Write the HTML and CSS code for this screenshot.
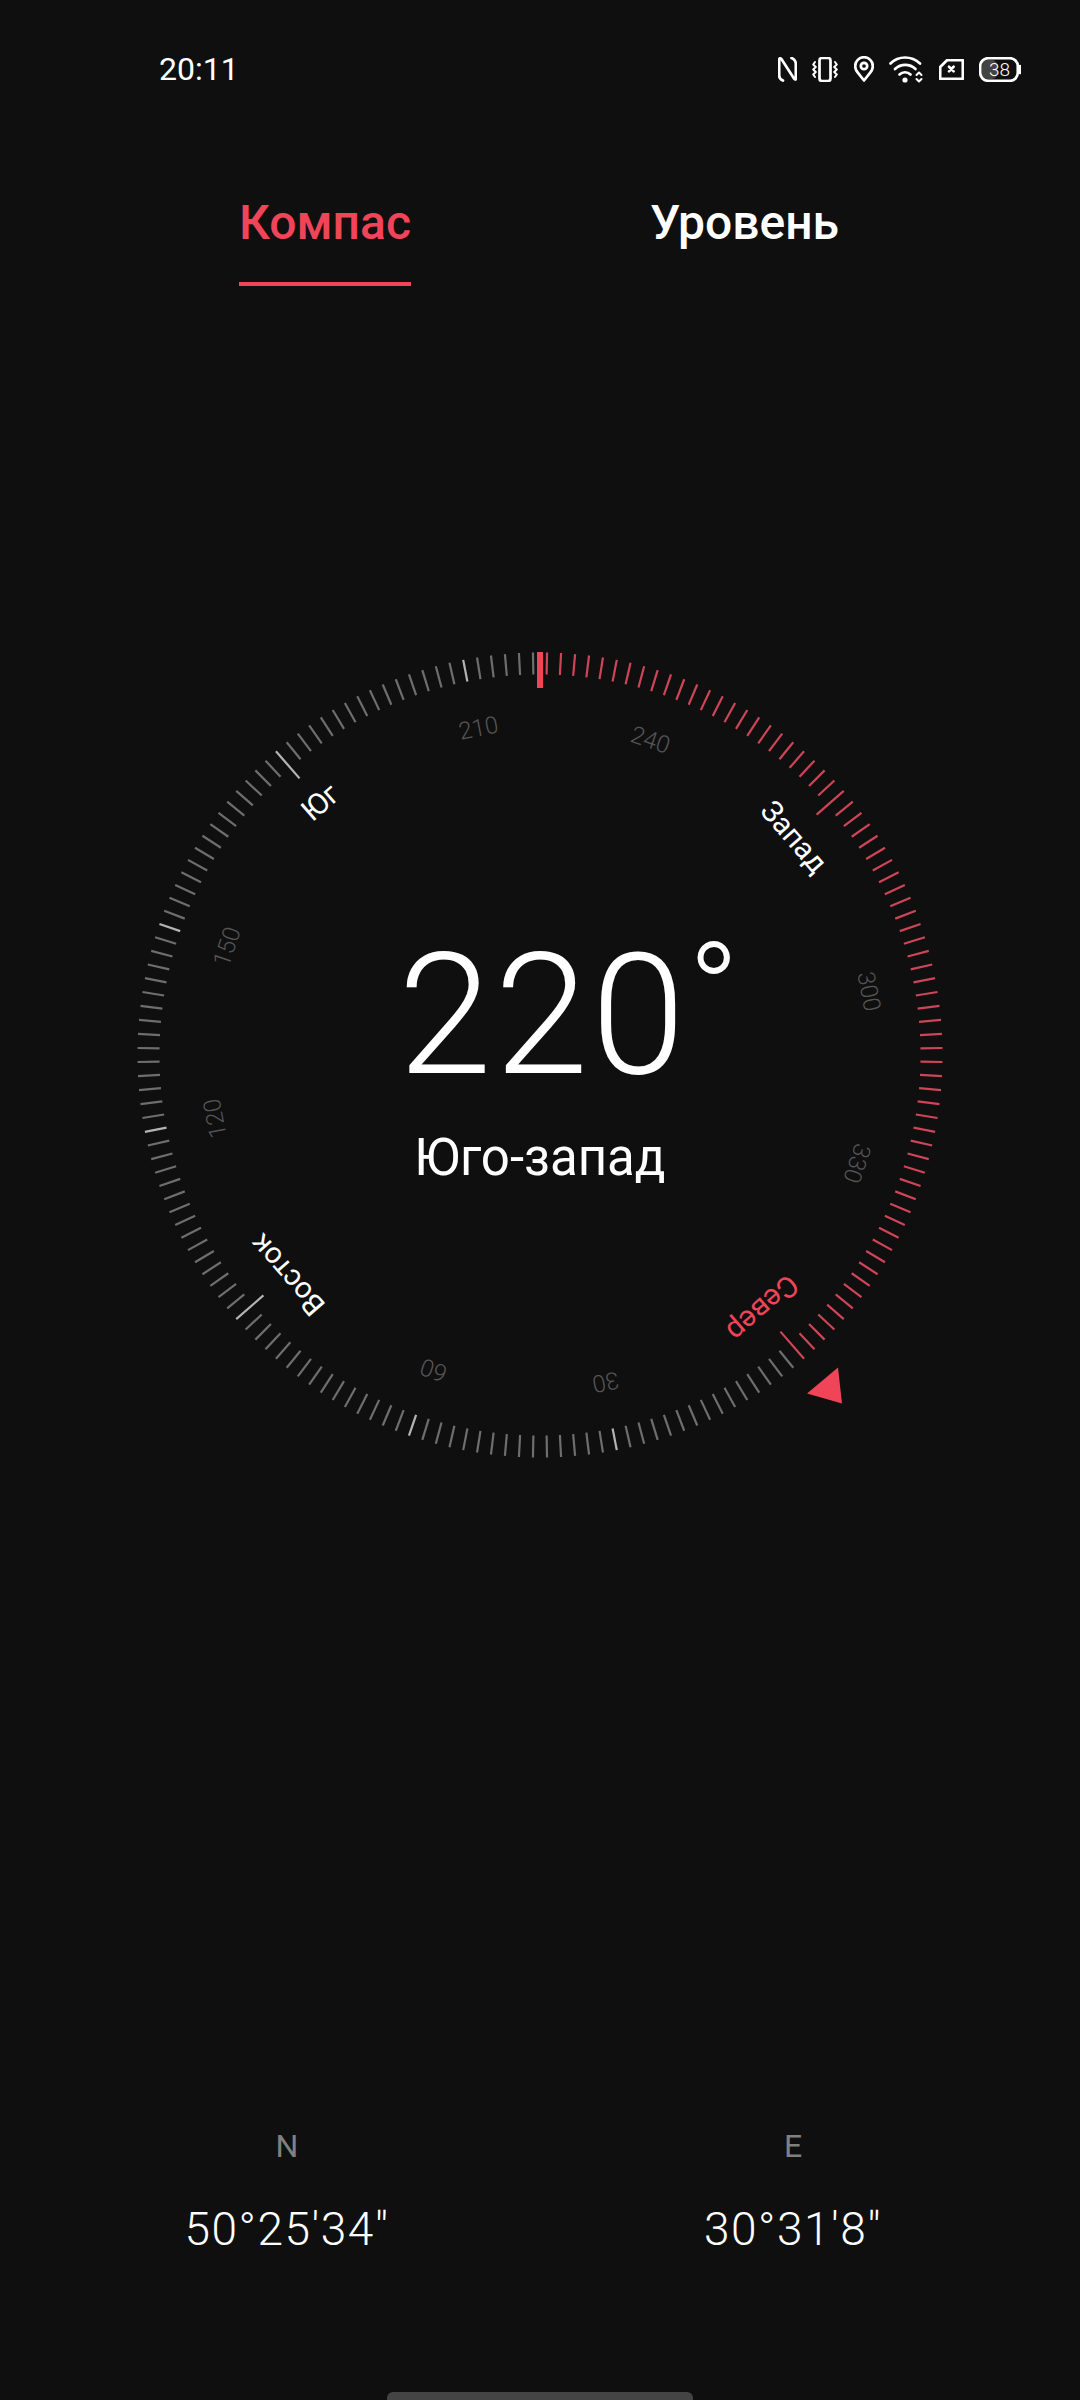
FILE: index.html
```html
<!DOCTYPE html>
<html lang="ru">

<head>
  <meta charset="UTF-8">
  <meta name="viewport" content="width=device-width, initial-scale=1.0">
  <title>Компас</title>

  <link rel="stylesheet" href="styles.css">
</head>

<body>
  <main id="page">
    <div id="status">
      <span class="time">20:11</span>
      <div class="status-icons">
        <!-- NFC -->
        <svg class="icon" width="19" height="25" viewBox="0 0 19 25">
          <path d="M5 23.5C2.5 22.5 1.2 21 1.2 18.5V2.5C1.2 1.2 2.6 1 3.4 2L16 21.5C16.8 22.8 17.8 22.8 17.8 22V7C17.8 4 16 2 13.5 1" />
        </svg>
        <!-- Vibrate -->
        <svg class="icon" width="26" height="25" viewBox="0 0 26 25">
          <rect x="7.5" y="1" width="11" height="23" rx="2.5" />
          <path class="thin" d="M3 5L1.2 7.5L3.8 10L1.2 12.5L3.8 15L1.2 17.5L3 20" />
          <path class="thin" d="M23 5L24.8 7.5L22.2 10L24.8 12.5L22.2 15L24.8 17.5L23 20" />
        </svg>
        <!-- Location -->
        <svg class="icon" width="20" height="26" viewBox="0 0 20 26">
          <path d="M10 24.5L3.6 16.4C2 14.4 1.2 12.4 1.2 10.2C1.2 5.2 5 1.2 10 1.2C15 1.2 18.8 5.2 18.8 10.2C18.8 12.4 18 14.4 16.4 16.4Z" />
          <circle cx="10" cy="10" r="3.2" />
        </svg>
        <!-- Wifi -->
        <svg class="icon" width="34" height="27" viewBox="0 0 34 27">
          <path d="M1.5 7.5C9.5 -0.5 22.5 -0.5 31 7.5" />
          <path d="M6 13C12 7.5 20.5 7.5 26.5 13" />
          <path d="M10.5 18.5C13.5 15.5 18.5 15.5 21.5 18.5" />
          <circle class="solid" cx="16" cy="24" r="2.6" />
          <path class="thin" d="M27.5 19L30 16.5L32.5 19" />
          <path class="thin" d="M27.5 23L30 25.5L32.5 23" />
        </svg>
        <!-- SIM with x -->
        <svg class="icon" width="25" height="21" viewBox="0 0 25 21">
          <path d="M8 1.2H23.8V19.8H1.2V8Z" />
          <path d="M10 7.8L14.6 12.4M14.6 7.8L10 12.4" />
        </svg>
        <!-- Battery -->
        <svg class="icon" width="42" height="25" viewBox="0 0 42 25">
          <rect class="battery-level" x="3" y="3" width="15" height="19" rx="5" />
          <rect x="1.2" y="1.2" width="37.6" height="22.6" rx="8" />
          <path d="M41 9V16" />
          <text class="battery-text" x="20.5" y="19">38</text>
        </svg>
      </div>
    </div>

    <div id="tabs">
      <div class="tab tab-active">Компас</div>
      <div class="tab">Уровень</div>
    </div>

    <div id="compass">
      <svg id="dial" width="820" height="820" viewBox="-410 -410 820 820">
        <g id="ticks"></g>

        <rect class="pointer" x="-3" y="-403" width="6" height="36" />
        <path class="pointer" d="M298 312.5L267 338.5L302 348.5Z" />

        <text class="cardinal" transform="rotate(-41) translate(0 -335)">Юг</text>
        <text class="cardinal" transform="rotate(49) translate(2 -335)">Запад</text>
        <text class="cardinal north" transform="rotate(139) translate(-2 -337)">Север</text>
        <text class="cardinal" transform="rotate(-131) translate(0 -335)">Восток</text>

        <g transform="translate(2 0)">
          <text class="degree" transform="rotate(-11) translate(0 -333)">210</text>
          <text class="degree" transform="rotate(19) translate(0 -333)">240</text>
          <text class="degree" transform="rotate(79) translate(0 -333)">300</text>
          <text class="degree" transform="rotate(109) translate(0 -333)">330</text>
          <text class="degree" transform="rotate(169) translate(0 -333)">30</text>
          <text class="degree" transform="rotate(-161) translate(0 -333)">60</text>
          <text class="degree" transform="rotate(-101) translate(0 -333)">120</text>
          <text class="degree" transform="rotate(-71) translate(0 -333)">150</text>
        </g>
      </svg>

      <div class="readout">
        <div class="heading">220<span class="heading-deg">°</span></div>
        <div class="direction">Юго-запад</div>
      </div>
    </div>

    <div id="coords">
      <div class="coord">
        <div class="coord-name">N</div>
        <div class="coord-value">50°25'34"</div>
      </div>
      <div class="coord">
        <div class="coord-name">E</div>
        <div class="coord-value">30°31'8"</div>
      </div>
    </div>

    <div id="homebar"></div>
  </main>

  <script src="dial.js"></script>
</body>

</html>
```

FILE: styles.css
```css
html,
body {
  padding: 0;
  margin: 0;
  overflow: hidden;
  background-color: #0f0f0f;
}

#page {
  display: flex;
  flex-direction: column;
  width: 1080px;
  height: 2400px;
  font-family: Roboto, "Liberation Sans", sans-serif;
  color: #fff;
}

#status {
  display: flex;
  align-items: center;
  justify-content: space-between;
  height: 26px;
  padding: 56px 59px 0 159px;
}

.time {
  font-size: 32px;
  line-height: 38px;
}

.status-icons {
  display: flex;
  align-items: center;
  gap: 15.5px;
}

.icon {
  display: block;
  fill: none;
  stroke: #fff;
  stroke-width: 2.7;
  stroke-linejoin: round;
  stroke-linecap: round;
}

.icon .thin {
  stroke-width: 2;
}

.icon .solid {
  fill: #fff;
  stroke: none;
}

.icon .battery-level {
  fill: #444;
  stroke: none;
}

.icon .battery-text {
  fill: #fff;
  stroke: none;
  font-size: 19px;
  font-weight: 300;
  text-anchor: middle;
}

#tabs {
  display: flex;
  gap: 239px;
  padding: 113px 0 0 239px;
}

.tab {
  font-size: 48px;
  font-weight: 500;
  line-height: 56px;
  padding-bottom: 35px;
}

.tab-active {
  color: #f04458;
  padding-bottom: 31px;
  border-bottom: 4px solid #f04458;
}

#compass {
  position: relative;
  display: flex;
  justify-content: center;
  margin-top: 359px;
}

#dial {
  display: block;
}

.tick {
  stroke: #6e6e6e;
  stroke-width: 2.2;
}

.tick-major {
  stroke: #b4b4b4;
}

.tick-red {
  stroke: #cf4558;
}

.pointer {
  fill: #f04458;
}

.cardinal {
  fill: #fff;
  font-size: 29.5px;
  text-anchor: middle;
  dominant-baseline: central;
}

.cardinal.north {
  fill: #f04458;
}

.degree {
  fill: #555;
  font-size: 24px;
  font-weight: 300;
  text-anchor: middle;
  dominant-baseline: central;
}

.readout {
  position: absolute;
  top: 285px;
  left: 0;
  right: 0;
  display: flex;
  flex-direction: column;
  align-items: center;
  gap: 28px;
}

.heading {
  position: relative;
  padding-left: 6px;
  font-size: 169px;
  font-weight: 300;
  line-height: 170px;
  letter-spacing: 3px;
}

.heading-deg {
  position: absolute;
  top: -5px;
  left: 100%;
  font-size: 136px;
  line-height: 136px;
}

.direction {
  font-size: 51px;
  line-height: 60px;
}

#coords {
  display: flex;
  gap: 206px;
  padding-left: 137px;
  margin-top: 661px;
}

.coord {
  display: flex;
  flex-direction: column;
  align-items: center;
  gap: 35px;
  width: 300px;
}

.coord-name {
  font-size: 32px;
  line-height: 40px;
  color: #808080;
}

.coord-value {
  font-size: 46px;
  font-weight: 300;
  line-height: 56px;
  letter-spacing: 1.5px;
}

#homebar {
  align-self: center;
  width: 306px;
  height: 8px;
  margin-top: 135px;
  border-radius: 6px 6px 0 0;
  background-color: #444;
}
```

FILE: dial.js
```js
// dial scale, one tick every 2 degrees. 221 is what sits under the top mark
const NS = 'http://www.w3.org/2000/svg';
const ticks = document.getElementById('ticks');

for (let deg = 0; deg < 360; deg += 2) {
  const angle = ((deg - 221 + 540) % 360) - 180;

  const line = document.createElementNS(NS, 'line');
  let cls = 'tick';
  let len = 22;

  if (deg % 90 === 0) {
    len = 36;
  }
  if (angle > 0 && angle < 140) {
    cls += ' tick-red';
  } else if (deg % 30 === 0) {
    cls += ' tick-major';
  }

  line.setAttribute('class', cls);
  line.setAttribute('y1', -402.5);
  line.setAttribute('y2', -402.5 + len);
  line.setAttribute('transform', 'rotate(' + angle + ')');
  ticks.appendChild(line);
}
```
